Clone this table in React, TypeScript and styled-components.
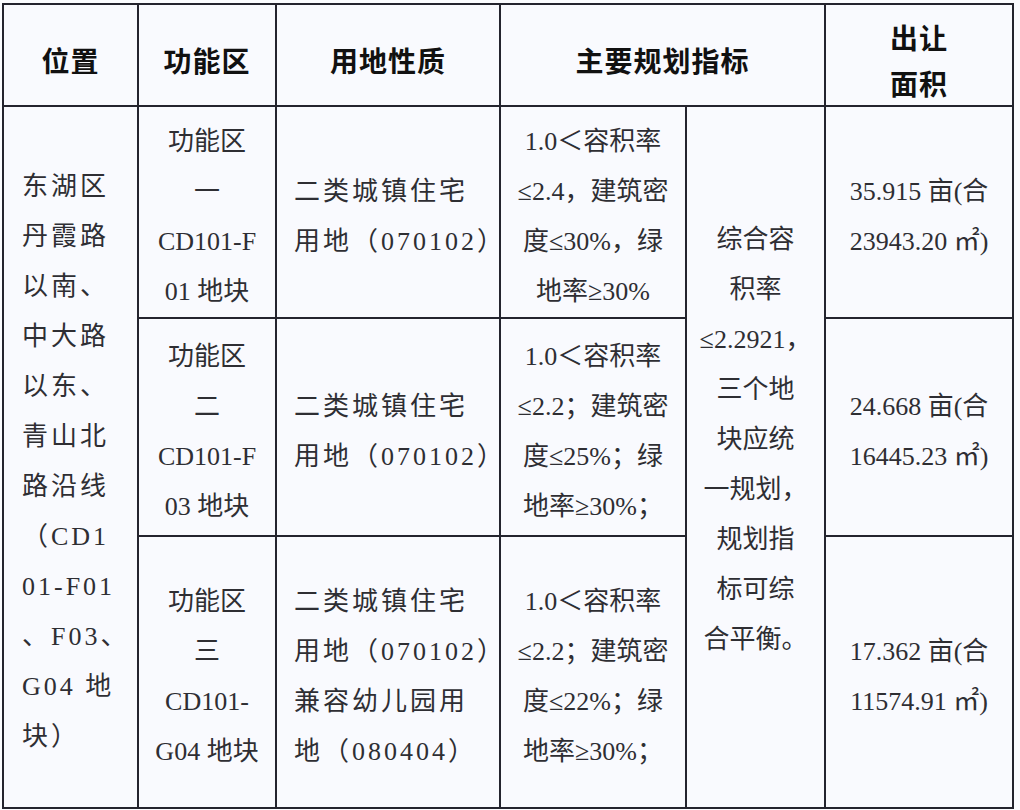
import styled, { createGlobalStyle } from "styled-components";

const GlobalStyle = createGlobalStyle`
    html, body {
        margin: 0;
        padding: 0;
        background: #fbfcff;
    }
`;

const Sheet = styled.div`
    display: grid;
    grid-template-columns: 133px 136px 222px 184px 137px 186px;
    grid-template-rows: 100px 210px 216px 270px;
    gap: 2px;
    padding: 2px;
    margin: 3px 0 0 2px;
    width: max-content;
    background: #24242e;
    font-family: "Liberation Serif", "Noto Sans CJK SC", serif;
`;

interface CellProps {
    $col: string;
    $row: string;
    $align?: "left" | "center";
    $indent?: number;
    $spacing?: number;
    $lift?: number;
}

const Cell = styled.div<CellProps>`
    grid-column: ${(p) => p.$col};
    grid-row: ${(p) => p.$row};
    display: flex;
    flex-direction: column;
    justify-content: center;
    align-items: ${(p) => (p.$align === "left" ? "flex-start" : "center")};
    padding: 10px 0 ${(p) => p.$lift ?? 0}px ${(p) => p.$indent ?? 0}px;
    background: #f9fafe;
    color: #2e2e33;
    font-size: 26px;
    line-height: 50px;
    letter-spacing: ${(p) => p.$spacing ?? 0}px;
`;

const HeadCell = styled(Cell)`
    color: #111;
    font-family: "Noto Sans CJK SC", sans-serif;
    font-weight: 700;
    font-size: 28px;
    line-height: 46px;
    letter-spacing: 1px;
`;

const Line = styled.span`
    display: block;
    white-space: nowrap;
`;

const Lines = ({ items }: { items: string[] }) => (
    <>
        {items.map((t, i) => (
            <Line key={i}>{t}</Line>
        ))}
    </>
);

const location = [
    "东湖区",
    "丹霞路",
    "以南、",
    "中大路",
    "以东、",
    "青山北",
    "路沿线",
    "（CD1",
    "01-F01",
    "、F03、",
    "G04 地",
    "块）",
];

const overall = [
    "综合容",
    "积率",
    "≤2.2921，",
    "三个地",
    "块应统",
    "一规划，",
    "规划指",
    "标可综",
    "合平衡。",
];

const rows = [
    {
        zone: ["功能区", "一", "CD101-F", "01 地块"],
        use: ["二类城镇住宅", "用地（070102）"],
        index: ["1.0＜容积率", "≤2.4，建筑密", "度≤30%，绿", "地率≥30%"],
        area: ["35.915 亩(合", "23943.20 ㎡)"],
    },
    {
        zone: ["功能区", "二", "CD101-F", "03 地块"],
        use: ["二类城镇住宅", "用地（070102）"],
        index: ["1.0＜容积率", "≤2.2；建筑密", "度≤25%；绿", "地率≥30%；"],
        area: ["24.668 亩(合", "16445.23 ㎡)"],
    },
    {
        zone: ["功能区", "三", "CD101-", "G04 地块"],
        use: ["二类城镇住宅", "用地（070102）", "兼容幼儿园用", "地（080404）"],
        index: ["1.0＜容积率", "≤2.2；建筑密", "度≤22%；绿", "地率≥30%；"],
        area: ["17.362 亩(合", "11574.91 ㎡)"],
    },
];

export default function App() {
    return (
        <>
            <GlobalStyle />
            <Sheet>
                <HeadCell $col="1" $row="1" $spacing={3}>位置</HeadCell>
                <HeadCell $col="2" $row="1">功能区</HeadCell>
                <HeadCell $col="3" $row="1">用地性质</HeadCell>
                <HeadCell $col="4 / span 2" $row="1">主要规划指标</HeadCell>
                <HeadCell $col="6" $row="1">
                    <Lines items={["出让", "面积"]} />
                </HeadCell>

                <Cell $col="1" $row="2 / span 3" $align="left" $indent={18} $spacing={3}>
                    <Lines items={location} />
                </Cell>
                <Cell $col="5" $row="2 / span 3" $lift={44}>
                    <Lines items={overall} />
                </Cell>

                {rows.map((r, i) => {
                    const row = String(i + 2);
                    return (
                        <div key={i} style={{ display: "contents" }}>
                            <Cell $col="2" $row={row}>
                                <Lines items={r.zone} />
                            </Cell>
                            <Cell $col="3" $row={row} $align="left" $indent={17} $spacing={3}>
                                <Lines items={r.use} />
                            </Cell>
                            <Cell $col="4" $row={row}>
                                <Lines items={r.index} />
                            </Cell>
                            <Cell $col="6" $row={row}>
                                <Lines items={r.area} />
                            </Cell>
                        </div>
                    );
                })}
            </Sheet>
        </>
    );
}
